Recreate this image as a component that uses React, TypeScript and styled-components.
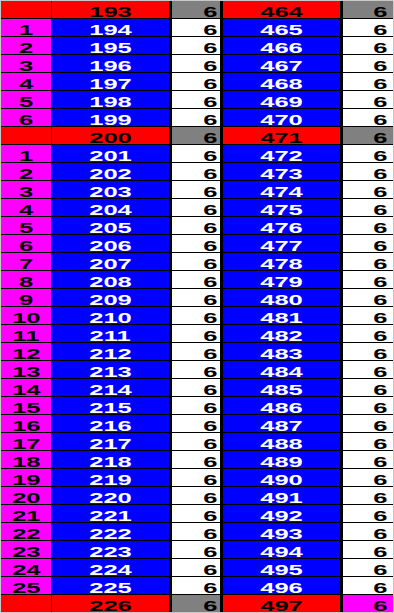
import React from 'react';
import styled, { createGlobalStyle } from 'styled-components';

// -- types --
type Tone = 'red' | 'magenta' | 'blue' | 'white' | 'grey';

interface CellData {
  text: string;
  tone: Tone;
}

const TONES: Record<Tone, { bg: string; fg: string }> = {
  red: { bg: '#ff0000', fg: '#000000' },
  magenta: { bg: '#ff00ff', fg: '#000000' },
  blue: { bg: '#0000ff', fg: '#ffffff' },
  white: { bg: '#ffffff', fg: '#000000' },
  grey: { bg: '#808080', fg: '#000000' },
};

// border-left width and text alignment per column
const COLUMNS = [
  { border: 0, align: 'center', pad: 0 },
  { border: 1, align: 'center', pad: 0 },
  { border: 3, align: 'right', pad: 3 },
  { border: 3, align: 'center', pad: 0 },
  { border: 3, align: 'right', pad: 6 },
] as const;

// -- styles --
const GlobalStyle = createGlobalStyle`
  html, body {
    margin: 0;
    padding: 0;
    background: #ffffff;
  }
`;

const Sheet = styled.div`
  display: grid;
  grid-template-columns: 50px 118px 51px 120px 53px;
  grid-auto-rows: 17px;
  row-gap: 1px;
  width: 394px;
  box-sizing: border-box;
  border: 1px solid #c8c8c8;
  background-color: #000000;
`;

const Cell = styled.div<{ $tone: Tone; $border: number; $align: string; $pad: number }>`
  display: flex;
  align-items: flex-end;
  justify-content: ${(p) => (p.$align === 'right' ? 'flex-end' : 'center')};
  box-sizing: border-box;
  height: 17px;
  border-left: ${(p) => p.$border}px solid #000000;
  padding-right: ${(p) => p.$pad}px;
  background-color: ${(p) => TONES[p.$tone].bg};
  color: ${(p) => TONES[p.$tone].fg};
`;

const Label = styled.span<{ $align: string }>`
  display: inline-block;
  font-family: 'Liberation Sans', Arial, sans-serif;
  font-weight: bold;
  font-size: 15px;
  line-height: 13px;
  transform-origin: ${(p) => (p.$align === 'right' ? 'right' : 'center')} center;
  transform: scaleX(1.7);
`;

// -- data --
const headRow = (a: number, b: number, last: Tone = 'grey'): CellData[] => [
  { text: '', tone: 'red' },
  { text: String(a), tone: 'red' },
  { text: '6', tone: 'grey' },
  { text: String(b), tone: 'red' },
  { text: '6', tone: last },
];

const bodyRow = (n: number, a: number, b: number): CellData[] => [
  { text: String(n), tone: 'magenta' },
  { text: String(a), tone: 'blue' },
  { text: '6', tone: 'white' },
  { text: String(b), tone: 'blue' },
  { text: '6', tone: 'white' },
];

const buildRows = (): CellData[][] => {
  const rows: CellData[][] = [headRow(193, 464)];
  for (let i = 1; i <= 6; i += 1) rows.push(bodyRow(i, 193 + i, 464 + i));
  rows.push(headRow(200, 471));
  for (let i = 1; i <= 25; i += 1) rows.push(bodyRow(i, 200 + i, 471 + i));
  rows.push(headRow(226, 497, 'magenta'));
  return rows;
};

const App: React.FC = () => {
  const rows = buildRows();

  return (
    <>
      <GlobalStyle />
      <Sheet>
        {rows.map((row, r) =>
          row.map((cell, c) => (
            <Cell
              key={`${r}-${c}`}
              $tone={cell.tone}
              $border={COLUMNS[c].border}
              $align={COLUMNS[c].align}
              $pad={COLUMNS[c].pad}
            >
              <Label $align={COLUMNS[c].align}>{cell.text}</Label>
            </Cell>
          )),
        )}
      </Sheet>
    </>
  );
};

export default App;
